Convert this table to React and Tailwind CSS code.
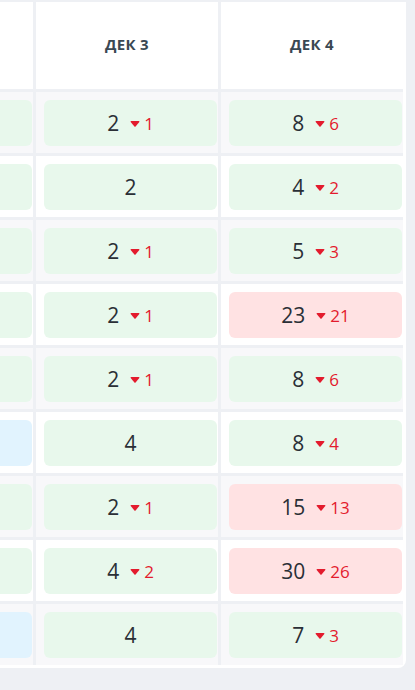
import React from "react";

const rows = [
  { c1: "g", d3: [2, 1], d4: [8, 6, "g"] },
  { c1: "g", d3: [2, null], d4: [4, 2, "g"] },
  { c1: "g", d3: [2, 1], d4: [5, 3, "g"] },
  { c1: "g", d3: [2, 1], d4: [23, 21, "r"] },
  { c1: "g", d3: [2, 1], d4: [8, 6, "g"] },
  { c1: "b", d3: [4, null], d4: [8, 4, "g"] },
  { c1: "g", d3: [2, 1], d4: [15, 13, "r"] },
  { c1: "g", d3: [4, 2], d4: [30, 26, "r"] },
  { c1: "b", d3: [4, null], d4: [7, 3, "g"] },
];

const pillBg = {
  g: "bg-[#e8f8ec]",
  r: "bg-[#ffe2e3]",
  b: "bg-[#e1f3fe]",
};

function Caret() {
  return (
    <svg width="10" height="6" viewBox="0 0 10 6" className="mt-[1px]">
      <path d="M0.5 0.8 Q0.5 0 1.4 0 L8.6 0 Q9.5 0 9.5 0.8 L5.6 5.4 Q5 6 4.4 5.4 Z" fill="#e31b2d" />
    </svg>
  );
}

function Value({ v, d, color }) {
  return (
    <div
      className={`h-[46px] rounded-md ${pillBg[color]} flex items-center justify-center`}
    >
      <span className="text-[21px] leading-none text-[#2a2f36]">{v}</span>
      {d !== null && d !== undefined && (
        <span className="flex items-center ml-[11px] gap-[4px]">
          <Caret />
          <span className="text-[17px] leading-none text-[#e31b2d]">{d}</span>
        </span>
      )}
    </div>
  );
}

export default function App() {
  return (
    <div
      className="min-h-screen bg-[#eef0f4] pt-[2px]"
      style={{ fontFamily: '"Open Sans", "Noto Sans", sans-serif' }}
    >
      <div className="w-[406px] bg-white rounded-br-lg pr-[3px] pb-[3px]">
        <div className="grid grid-cols-[33px_182px_182px] gap-[3px] bg-[#eef0f4]">
          <div className="h-[87px] bg-white" />
          <div className="h-[87px] bg-white flex items-center justify-center pb-[3px]">
            <span className="text-[15px] font-bold text-[#3a4853] tracking-[0.3px]">ДЕК 3</span>
          </div>
          <div className="h-[87px] bg-white flex items-center justify-center pb-[3px]">
            <span className="text-[15px] font-bold text-[#3a4853] tracking-[0.3px]">ДЕК 4</span>
          </div>
          {rows.map((r, i) => {
            const rowBg = i % 2 === 0 ? "bg-[#f8f8fa]" : "bg-white";
            return (
              <React.Fragment key={i}>
                <div className={`${rowBg} h-[61px] pt-2 pr-[1px]`}>
                  <div className={`h-[46px] rounded-r-md ${pillBg[r.c1]}`} />
                </div>
                <div className={`${rowBg} h-[61px] pt-2 pl-2 pr-[1px]`}>
                  <Value v={r.d3[0]} d={r.d3[1]} color="g" />
                </div>
                <div className={`${rowBg} h-[61px] pt-2 pl-2 pr-[1px]`}>
                  <Value v={r.d4[0]} d={r.d4[1]} color={r.d4[2]} />
                </div>
              </React.Fragment>
            );
          })}
        </div>
      </div>
    </div>
  );
}
